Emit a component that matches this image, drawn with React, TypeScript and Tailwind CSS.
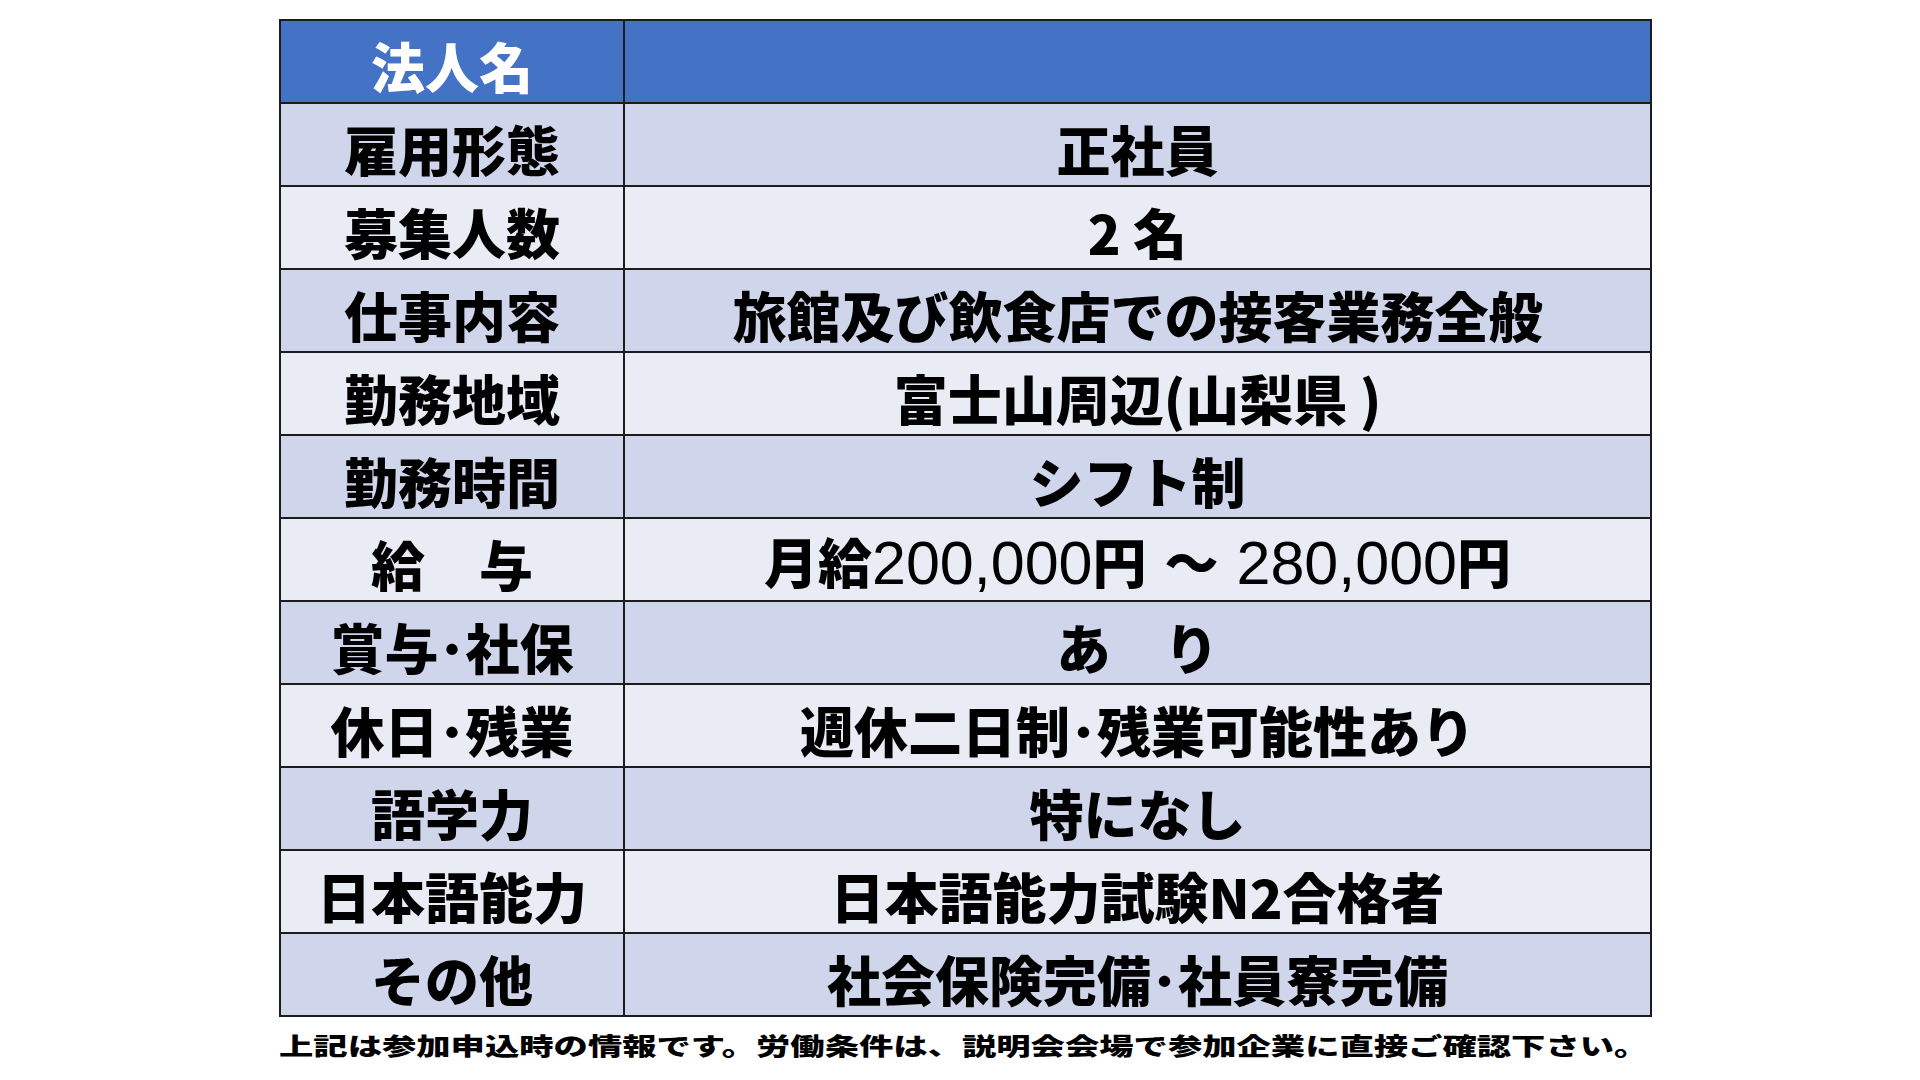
import { ReactNode } from "react"

const Num = ({ children }: { children: ReactNode }) => (
	<span className="font-['Liberation_Sans',sans-serif] font-normal text-[61px]">
		{children}
	</span>
)

const rows: { label: string; value: ReactNode }[] = [
	{ label: "雇用形態", value: "正社員" },
	{ label: "募集人数", value: "2 名" },
	{ label: "仕事内容", value: "旅館及び飲食店での接客業務全般" },
	{ label: "勤務地域", value: "富士山周辺(山梨県 )" },
	{ label: "勤務時間", value: "シフト制" },
	{
		label: "給　与",
		value: (
			<>
				月給<Num>200,000</Num>円<span className="mx-[18px]">～</span>
				<Num>280,000</Num>円
			</>
		),
	},
	{ label: "賞与･社保", value: "あ　り" },
	{ label: "休日･残業", value: "週休二日制･残業可能性あり" },
	{ label: "語学力", value: "特になし" },
	{ label: "日本語能力", value: "日本語能力試験N2合格者" },
	{ label: "その他", value: "社会保険完備･社員寮完備" },
]

export default function App() {
	return (
		<div className="w-[1920px] h-[1080px] bg-white overflow-hidden font-['Noto_Sans_CJK_JP','Noto_Sans',sans-serif]">
			<div className="pl-[279px] pt-[19px]">
				<table className="table-fixed border-collapse w-[1373px] text-[54px] font-black leading-none text-black">
					<colgroup>
						<col className="w-[344px]" />
						<col />
					</colgroup>
					<tbody>
						<tr className="h-[83px] bg-[#4472c4]">
							<td className="border-2 border-[#1c1c1c] text-center text-white pt-2">
								法人名
							</td>
							<td className="border-2 border-[#1c1c1c]" />
						</tr>
						{rows.map((r, i) => (
							<tr
								key={r.label}
								className={
									"h-[83px] " +
									(i % 2 === 0 ? "bg-[#cfd5ea]" : "bg-[#e9ebf5]")
								}
							>
								<td className="border-2 border-[#1c1c1c] text-center pt-2 whitespace-pre">
									{r.label}
								</td>
								<td className="border-2 border-[#1c1c1c] text-center pt-2 whitespace-pre">
									{r.value}
								</td>
							</tr>
						))}
					</tbody>
				</table>
				<p className="mt-[16px] text-[24px] font-black leading-none whitespace-nowrap origin-left scale-x-[1.43]">
					上記は参加申込時の情報です。労働条件は、説明会会場で参加企業に直接ご確認下さい。
				</p>
			</div>
		</div>
	)
}
